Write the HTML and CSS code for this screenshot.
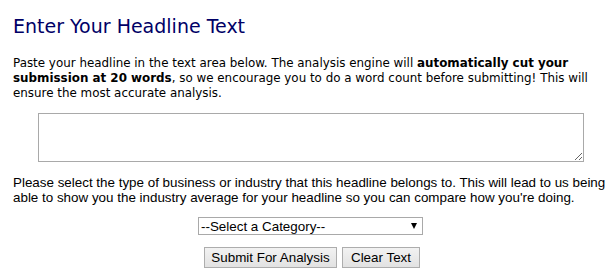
FILE: index.html
```html
<!DOCTYPE html>
<html lang="en">

<head>
  <meta charset="UTF-8">
  <title>Headline Analyzer</title>
  <link rel="stylesheet" href="styles.css">
</head>

<body>
  <div class="panel">
    <h2 class="title">Enter Your Headline Text</h2>

    <p class="intro">Paste your headline in the text area below. The analysis engine will <b>automatically cut your submission at 20 words</b>, so we encourage you to do a word count before submitting! This will ensure the most accurate analysis.</p>

    <div class="field">
      <textarea class="headline-box"></textarea>
    </div>

    <p class="note">Please select the type of business or industry that this headline belongs to. This will lead to us being able to show you the industry average for your headline so you can compare how you're doing.</p>

    <div class="field">
      <div class="select-wrap">
        <select class="category">
          <option>--Select a Category--</option>
        </select>
      </div>
    </div>

    <div class="actions">
      <button class="btn btn-submit">Submit For Analysis</button>
      <button class="btn btn-clear">Clear Text</button>
    </div>
  </div>
</body>

</html>
```

FILE: styles.css
```css
body {
  margin: 0;
  background-color: #fff;
}

.panel {
  width: 595px;
  padding: 13px 0 0 13px;
}

.title {
  margin: 0;
  font-family: "DejaVu Sans", Verdana, sans-serif;
  font-size: 19px;
  font-weight: normal;
  color: #000066;
  line-height: 26px;
}

.intro {
  margin: 17px 0 0;
  font-family: "DejaVu Sans", Verdana, sans-serif;
  font-size: 11.9px;
  line-height: 15px;
  color: #000;
}

.field {
  display: flex;
  justify-content: center;
}

.headline-box {
  margin-top: 12px;
  width: 546px;
  height: 49px;
  box-sizing: border-box;
  border: 1px solid #a9a9a9;
  padding: 2px;
}

.note {
  margin: 13px -6px 0 0;
  font-family: "Liberation Sans", Arial, sans-serif;
  font-size: 13.4px;
  line-height: 15px;
  color: #000;
}

/* select with a plain black triangle */
.select-wrap {
  position: relative;
  margin-top: 12px;
}

.select-wrap::after {
  content: "";
  position: absolute;
  right: 6px;
  top: 6px;
  border-left: 3.5px solid transparent;
  border-right: 3.5px solid transparent;
  border-top: 6px solid #000;
  pointer-events: none;
}

.category {
  display: block;
  width: 225px;
  height: 18px;
  padding: 0 0 0 2px;
  font-family: "Liberation Sans", Arial, sans-serif;
  font-size: 13.4px;
  color: #000;
  border: 1px solid #a9a9a9;
  border-radius: 0;
  background: #fff;
  appearance: none;
  -webkit-appearance: none;
}

.actions {
  display: flex;
  justify-content: center;
  gap: 5px;
  margin-top: 12px;
  padding-left: 3px;
}

.btn {
  height: 21px;
  padding: 0;
  font-family: "Liberation Sans", Arial, sans-serif;
  font-size: 13.4px;
  border: 1px solid #adadad;
  border-radius: 0;
  background: linear-gradient(#f2f2f2, #e2e2e2);
  color: #000;
}

.btn-submit {
  width: 133px;
}

.btn-clear {
  width: 78px;
}
```
